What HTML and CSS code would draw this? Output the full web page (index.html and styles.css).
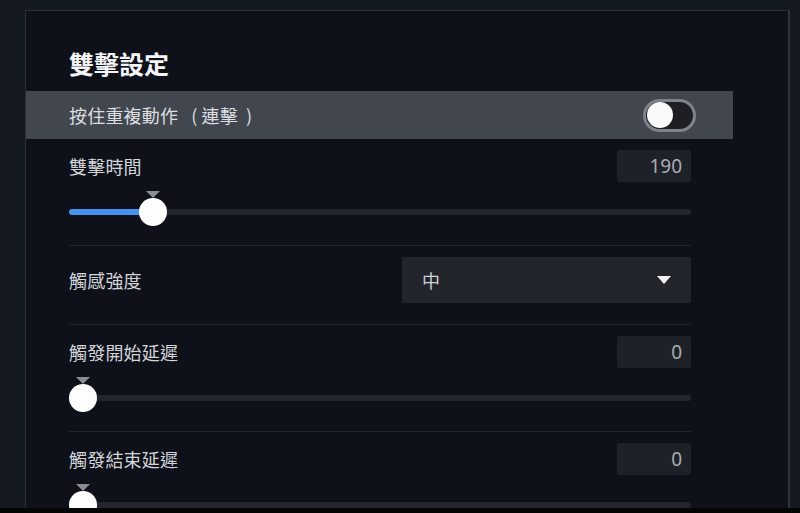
FILE: index.html
```html
<!DOCTYPE html>
<html lang="zh-Hant">
<head>
<meta charset="utf-8">
<title>雙擊設定</title>
<link rel="stylesheet" href="styles.css">
</head>
<body>
<div class="screen">
  <div class="backdrop">
    <section class="panel">
      <div class="column">
        <h1 class="title">雙擊設定</h1>

        <div class="row-highlight">
          <span class="label">按住重複動作<span class="po">(</span>連擊<span class="pc">)</span></span>
          <span class="toggle"><span class="knob"></span></span>
        </div>

        <div class="section">
          <div class="head">
            <span class="label">雙擊時間</span>
            <span class="num">190</span>
          </div>
          <div class="slider" style="--p:0.118">
            <div class="track"><div class="fill"></div></div>
            <div class="thumb"><span class="tick"></span></div>
          </div>
        </div>

        <div class="section select-section">
          <div class="head">
            <span class="label">觸感強度</span>
            <div class="select">
              <span class="select-text">中</span>
              <span class="caret"></span>
            </div>
          </div>
        </div>

        <div class="section">
          <div class="head">
            <span class="label">觸發開始延遲</span>
            <span class="num">0</span>
          </div>
          <div class="slider" style="--p:0">
            <div class="track"><div class="fill"></div></div>
            <div class="thumb"><span class="tick"></span></div>
          </div>
        </div>

        <div class="section last">
          <div class="head">
            <span class="label">觸發結束延遲</span>
            <span class="num">0</span>
          </div>
          <div class="slider" style="--p:0">
            <div class="track"><div class="fill"></div></div>
            <div class="thumb"><span class="tick"></span></div>
          </div>
        </div>
      </div>
    </section>
  </div>
  <div class="bottombar"></div>
</div>
</body>
</html>
```

FILE: styles.css
```css
* { box-sizing: border-box; margin: 0; padding: 0; }

html, body {
  width: 800px;
  height: 513px;
  overflow: hidden;
  background: #000;
}

body {
  font-family: "Noto Sans CJK TC", "Noto Sans", sans-serif;
  color: #d2d4d8;
}

.screen {
  width: 800px;
  height: 513px;
  display: flex;
  flex-direction: column;
}

.backdrop {
  height: 508px;
  background: #151920;
  padding: 10px 0 0 25px;
  overflow: hidden;
}

.bottombar {
  height: 5px;
  background: #050505;
}

.panel {
  width: 765px;
  height: 520px;
  background: #0e1119;
  border: 1px solid #2b2f38;
  border-bottom: none;
  border-right: 2px solid #30343d;
}

.column {
  width: 707px;
  display: flex;
  flex-direction: column;
}

.title {
  font-size: 25px;
  font-weight: 700;
  line-height: 28px;
  color: #f4f5f6;
  padding: 38px 0 14px 43px;
}

.label {
  font-size: 18px;
  line-height: 24px;
  color: #d3d5d9;
  letter-spacing: 0.2px;
}

.po { margin: 0 4px 0 13px; }
.pc { margin-left: 8px; }

.row-highlight {
  height: 48px;
  background: #42464e;
  display: flex;
  align-items: center;
  justify-content: space-between;
  padding: 0 37px 0 43px;
}

.row-highlight .label { color: #dcdee1; }

.toggle {
  width: 53px;
  height: 33px;
  border-radius: 17px;
  border: 3px solid #7f828a;
  background: #1d1f25;
  display: flex;
  align-items: center;
  padding-left: 1px;
}

.knob {
  width: 26px;
  height: 26px;
  border-radius: 50%;
  background: #fafafa;
}

.section {
  padding: 11px 42px 0 43px;
}

.section:not(.last)::after {
  content: "";
  display: block;
  height: 1px;
  background: #22252d;
}

.head {
  display: flex;
  align-items: center;
  justify-content: space-between;
  min-height: 32px;
}

.num {
  width: 74px;
  height: 32px;
  background: #1f2128;
  border-radius: 3px;
  font-family: "Noto Sans", sans-serif;
  font-size: 19px;
  line-height: 32px;
  color: #a9acb1;
  text-align: right;
  padding-right: 9px;
}

.slider {
  position: relative;
  height: 63px;
}

.track {
  position: absolute;
  left: 0;
  right: 0;
  top: 27px;
  height: 6px;
  border-radius: 3px;
  background: #23262d;
}

.fill {
  height: 100%;
  width: calc(14px + (100% - 28px) * var(--p));
  background: #4690ee;
  border-radius: 3px;
}

.thumb {
  position: absolute;
  top: 16px;
  left: calc(14px + (100% - 28px) * var(--p) - 14px);
  width: 28px;
  height: 28px;
  border-radius: 50%;
  background: #fdfdfd;
}

.tick {
  position: absolute;
  left: 7px;
  top: -7px;
  width: 0;
  height: 0;
  border-left: 7px solid transparent;
  border-right: 7px solid transparent;
  border-top: 7px solid #8a8d94;
}

.select-section .head { padding-bottom: 21px; }

.select {
  width: 289px;
  height: 46px;
  background: #23252c;
  border-radius: 2px;
  display: flex;
  align-items: center;
  justify-content: space-between;
  padding: 0 20px 0 20px;
}

.select-text {
  font-size: 18px;
  color: #cfd1d5;
}

.caret {
  width: 0;
  height: 0;
  border-left: 7px solid transparent;
  border-right: 7px solid transparent;
  border-top: 8px solid #f2f2f2;
}
```
